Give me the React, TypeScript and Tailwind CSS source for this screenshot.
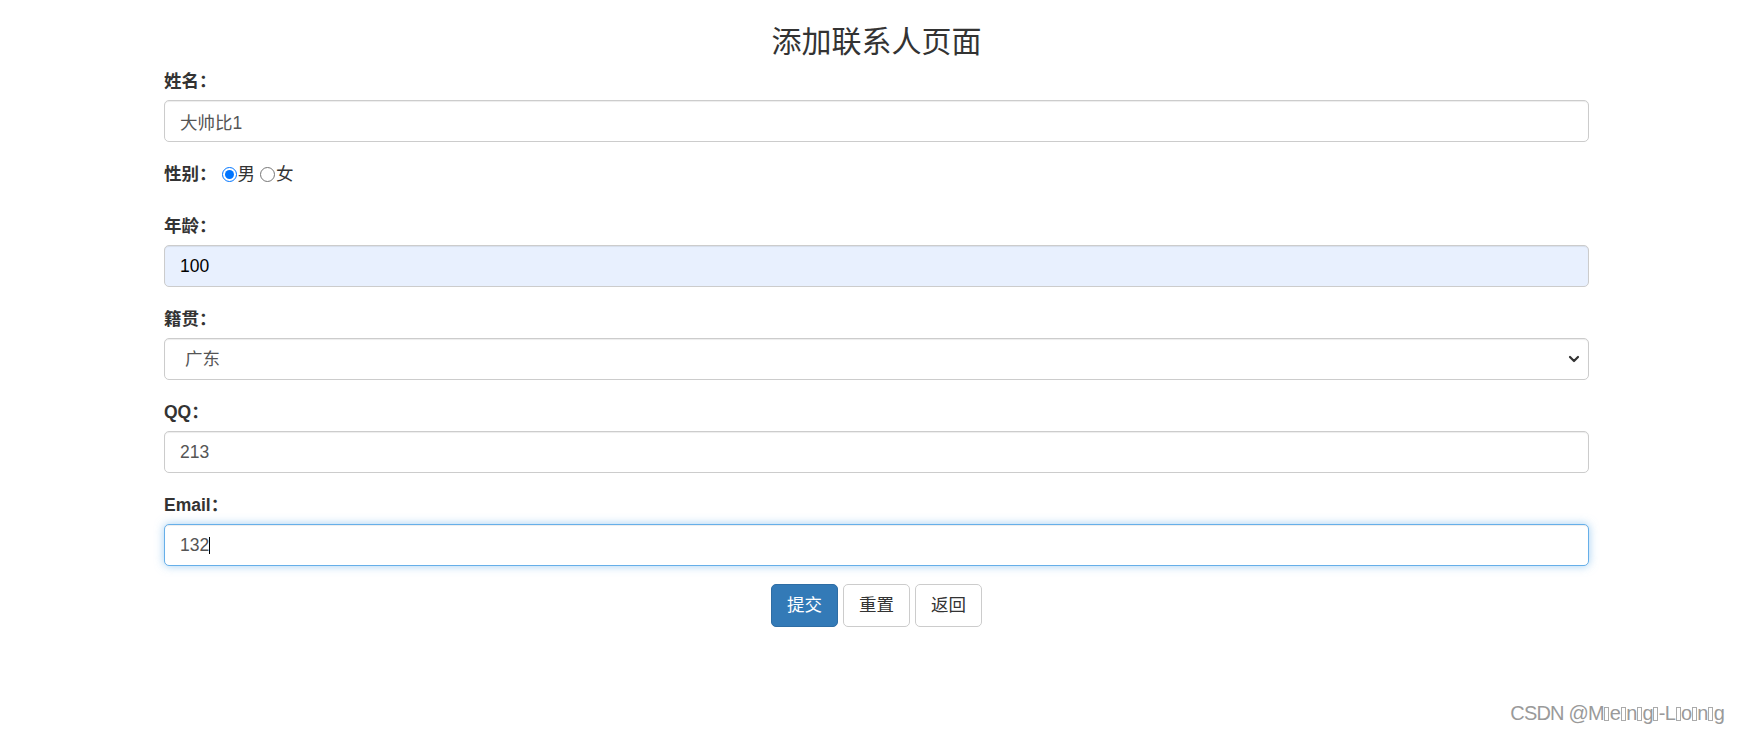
import React from 'react'

const font = "font-['Liberation_Sans','Noto_Sans_CJK_SC',sans-serif]"

function FieldLabel({ text }: { text: string }) {
  return <label className="block h-[25px] leading-[28px] text-[17.5px] font-bold text-[#333] mb-[8px]">{text}</label>
}

function TextInput({ value, autofill = false }: { value: string; autofill?: boolean }) {
  return (
    <input
      readOnly
      defaultValue={value}
      className={`block w-full h-[42px] px-[15px] text-[17.5px] border border-[#ccc] rounded-[5px] outline-none shadow-[inset_0_1px_1px_rgba(0,0,0,0.075)] ${font} ${
        autofill ? 'bg-[#e8f0fe] text-black' : 'bg-white text-[#555]'
      }`}
    />
  )
}

function Radio({ checked }: { checked?: boolean }) {
  return checked ? (
    <span className="inline-flex items-center justify-center w-[15px] h-[15px] rounded-full border-[1.5px] border-[#0075ff] bg-white ml-[5px] mr-[1px]">
      <span className="w-[9px] h-[9px] rounded-full bg-[#0075ff]" />
    </span>
  ) : (
    <span className="inline-block w-[15px] h-[15px] rounded-full border border-[#767676] bg-white ml-[5px] mr-[1px]" />
  )
}

function Tofu() {
  return <span className="inline-block w-[5px] h-[14px] border border-[#aaa] mx-[0.5px] align-[-1px]" />
}

export default function App() {
  return (
    <div className={`w-full h-[733px] bg-white flex flex-col ${font}`}>
      <div className="ml-[164px] w-[1425px]">
        {/* Title */}
        <h3 className="pt-[25px] leading-[33px] text-[30px] font-normal text-[#333] text-center mb-[9px]">添加联系人页面</h3>

        {/* Name */}
        <div className="mb-[20px]">
          <FieldLabel text="姓名：" />
          <TextInput value="大帅比1" />
        </div>

        {/* Gender */}
        <div className="flex items-center h-[25px] mb-[25px] text-[17.5px] text-[#333]">
          <span className="font-bold">性别：</span>
          <Radio checked />
          <span>男</span>
          <Radio />
          <span>女</span>
        </div>

        {/* Age */}
        <div className="mb-[18px]">
          <FieldLabel text="年龄：" />
          <TextInput value="100" autofill />
        </div>

        {/* Native place */}
        <div className="mb-[18px]">
          <FieldLabel text="籍贯：" />
          <div className="flex items-center justify-between w-full h-[42px] pl-[20px] pr-[8px] text-[17.5px] text-[#555] bg-white border border-[#ccc] rounded-[5px] shadow-[inset_0_1px_1px_rgba(0,0,0,0.075)]">
            <span>广东</span>
            <svg width="12" height="8" viewBox="0 0 12 8" fill="none" stroke="#333" strokeWidth="2.2" strokeLinecap="round" strokeLinejoin="round">
              <path d="M2 2l4 4 4-4" />
            </svg>
          </div>
        </div>

        {/* QQ */}
        <div className="mb-[18px]">
          <FieldLabel text="QQ：" />
          <TextInput value="213" />
        </div>

        {/* Email (focused) */}
        <div className="mb-[18px]">
          <FieldLabel text="Email：" />
          <div className="flex items-center w-full h-[42px] px-[15px] text-[17.5px] text-[#555] bg-white border border-[#66afe9] rounded-[5px] shadow-[inset_0_1px_1px_rgba(0,0,0,0.075),0_0_10px_rgba(102,175,233,0.6)]">
            <span>132</span>
            <span className="w-px h-[17px] bg-black" />
          </div>
        </div>

        {/* Buttons */}
        <div className="flex justify-center gap-[5px]">
          <button className="h-[43px] px-[15px] text-[17.5px] text-white bg-[#337ab7] border border-[#2e6da4] rounded-[5px]">提交</button>
          <button className="h-[43px] px-[15px] text-[17.5px] text-[#333] bg-white border border-[#ccc] rounded-[5px]">重置</button>
          <button className="h-[43px] px-[15px] text-[17.5px] text-[#333] bg-white border border-[#ccc] rounded-[5px]">返回</button>
        </div>
      </div>

      {/* Watermark */}
      <div className="mt-auto flex justify-end pr-[16px] pb-[9px]">
        <span className="text-[20px] leading-[22px] text-[#9a9a9a] tracking-[-0.8px]">
          CSDN @M<Tofu />e<Tofu />n<Tofu />g<Tofu />-L<Tofu />o<Tofu />n<Tofu />g
        </span>
      </div>
    </div>
  )
}
